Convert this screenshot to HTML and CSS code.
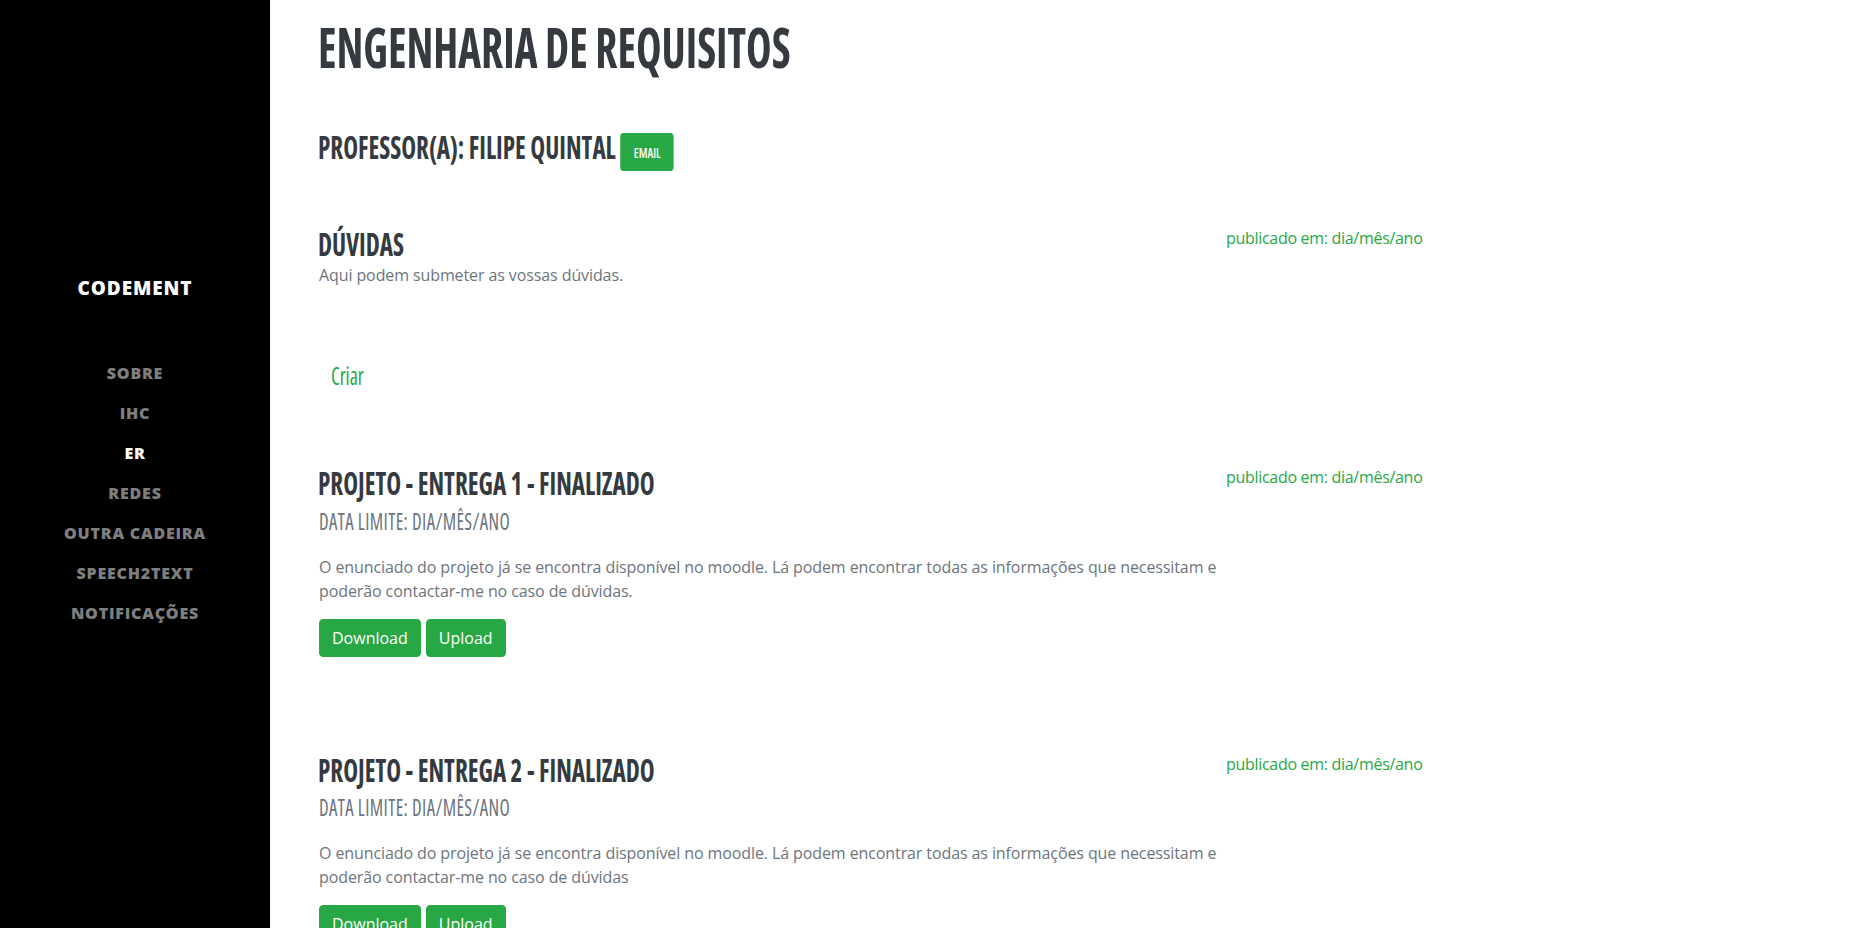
FILE: index.html
```html
<!DOCTYPE html>
<html lang="pt">
<head>
<meta charset="utf-8">
<title>Engenharia de Requisitos</title>
<link rel="stylesheet" href="styles.css">
</head>
<body>
<div class="layout">
  <aside class="sidebar">
    <div class="brand">CODEMENT</div>
    <ul class="nav">
      <li><a href="#">Sobre</a></li>
      <li><a href="#">IHC</a></li>
      <li><a href="#" class="active">ER</a></li>
      <li><a href="#">Redes</a></li>
      <li><a href="#">Outra Cadeira</a></li>
      <li><a href="#">Speech2Text</a></li>
      <li><a href="#">Notificações</a></li>
    </ul>
  </aside>
  <main class="main">
    <h1 class="title cond">ENGENHARIA DE REQUISITOS</h1>
    <div class="prof cond">
      <h3 class="prof-name">PROFESSOR(A): FILIPE QUINTAL</h3>
      <a href="#" class="btn-email">EMAIL</a>
    </div>

    <section class="item item-duvidas">
      <div class="item-body">
        <h3 class="item-title cond">DÚVIDAS</h3>
        <p class="desc">Aqui podem submeter as vossas dúvidas.</p>
      </div>
      <div class="item-date">publicado em: dia/mês/ano</div>
    </section>

    <a href="#" class="criar"><span class="cond criar-text">Criar</span></a>

    <section class="item item-first">
      <div class="item-body">
        <h3 class="item-title cond">PROJETO - ENTREGA 1 - FINALIZADO</h3>
        <div class="sub cond">DATA LIMITE: DIA/MÊS/ANO</div>
        <p class="desc desc-gap">O enunciado do projeto já se encontra disponível no moodle. Lá podem encontrar todas as informações que necessitam e poderão contactar-me no caso de dúvidas.</p>
        <div class="actions">
          <a href="#" class="btn">Download</a>
          <a href="#" class="btn">Upload</a>
        </div>
      </div>
      <div class="item-date">publicado em: dia/mês/ano</div>
    </section>

    <section class="item item-next">
      <div class="item-body">
        <h3 class="item-title cond">PROJETO - ENTREGA 2 - FINALIZADO</h3>
        <div class="sub cond">DATA LIMITE: DIA/MÊS/ANO</div>
        <p class="desc desc-gap">O enunciado do projeto já se encontra disponível no moodle. Lá podem encontrar todas as informações que necessitam e poderão contactar-me no caso de dúvidas</p>
        <div class="actions">
          <a href="#" class="btn">Download</a>
          <a href="#" class="btn">Upload</a>
        </div>
      </div>
      <div class="item-date">publicado em: dia/mês/ano</div>
    </section>
  </main>
</div>
</body>
</html>
```
FILE: styles.css
```css
* { box-sizing: border-box; }

html, body {
  margin: 0;
  padding: 0;
  background: #fff;
}

body {
  font-family: "Open Sans", "Liberation Sans", sans-serif;
  font-size: 16px;
  line-height: 24px;
  color: #6c757d;
}

a { text-decoration: none; }

.layout {
  display: flex;
  min-height: 100vh;
}

/* ---------- sidebar ---------- */
.sidebar {
  width: 270px;
  flex-shrink: 0;
  background: #000;
  display: flex;
  flex-direction: column;
  align-items: center;
  padding-top: 275px;
}

.brand {
  font-size: 19px;
  line-height: 27px;
  font-weight: 800;
  letter-spacing: 0.9px;
  color: #fff;
}

.nav {
  list-style: none;
  margin: 51px 0 0;
  padding: 0;
  text-align: center;
}

.nav a {
  display: block;
  padding: 8px 0;
  font-size: 16px;
  line-height: 24px;
  font-weight: 800;
  letter-spacing: 0.05rem;
  text-transform: uppercase;
  color: rgba(255, 255, 255, 0.5);
}

.nav a.active { color: #fff; }

/* ---------- main ---------- */
.main {
  flex: 1;
  padding: 14px 0 0 49px;
}

.cond {
  font-family: "Open Sans", sans-serif;
  font-stretch: 75%;
  font-weight: 700;
  color: #343a40;
  transform: scaleX(0.785);
  transform-origin: left center;
}

.title {
  margin: 0 0 48px -1px;
  font-size: 55px;
  line-height: 66px;
}

.prof {
  display: flex;
  align-items: flex-start;
  margin-left: -1px;
}

.prof-name {
  margin: 0;
  font-size: 32px;
  line-height: 38.4px;
}

.btn-email {
  display: flex;
  align-items: center;
  height: 38px;
  margin: 5px 0 0 6px;
  padding: 0 17px;
  background: #28a745;
  color: #fff;
  border-radius: 4px;
  font-size: 15px;
  font-weight: 600;
}

.item {
  display: grid;
  grid-template-columns: 905px auto;
  column-gap: 2px;
  width: 1102px;
}

.item-duvidas { margin-top: 54px; }
.item-first { margin-top: 65px; }
.item-next { margin-top: 94px; }

.item-title {
  margin: 0 0 0 -1px;
  font-size: 32px;
  line-height: 38.4px;
}

.item-date {
  padding-top: 1px;
  color: #28a745;
  white-space: nowrap;
  letter-spacing: -0.3px;
}

.sub {
  margin: 4px 0 0;
  font-size: 24px;
  line-height: 28px;
  font-weight: 500;
  letter-spacing: 0.5px;
  color: #6c757d;
}

.desc {
  margin: 0;
  letter-spacing: -0.1px;
}

.desc-gap { margin-top: 20px; }

.criar {
  display: inline-block;
  margin-top: 64px;
  padding: 6px 12px;
}

.criar-text {
  display: inline-block;
  font-size: 25px;
  line-height: 36px;
  font-weight: 500;
  color: #28a745;
}

.actions {
  display: flex;
  gap: 5px;
  margin-top: 16px;
}

.btn {
  display: inline-block;
  padding: 6px 12px;
  border: 1px solid #28a745;
  border-radius: 4px;
  background: #28a745;
  color: #fff;
  font-size: 16px;
  line-height: 24px;
}
```
